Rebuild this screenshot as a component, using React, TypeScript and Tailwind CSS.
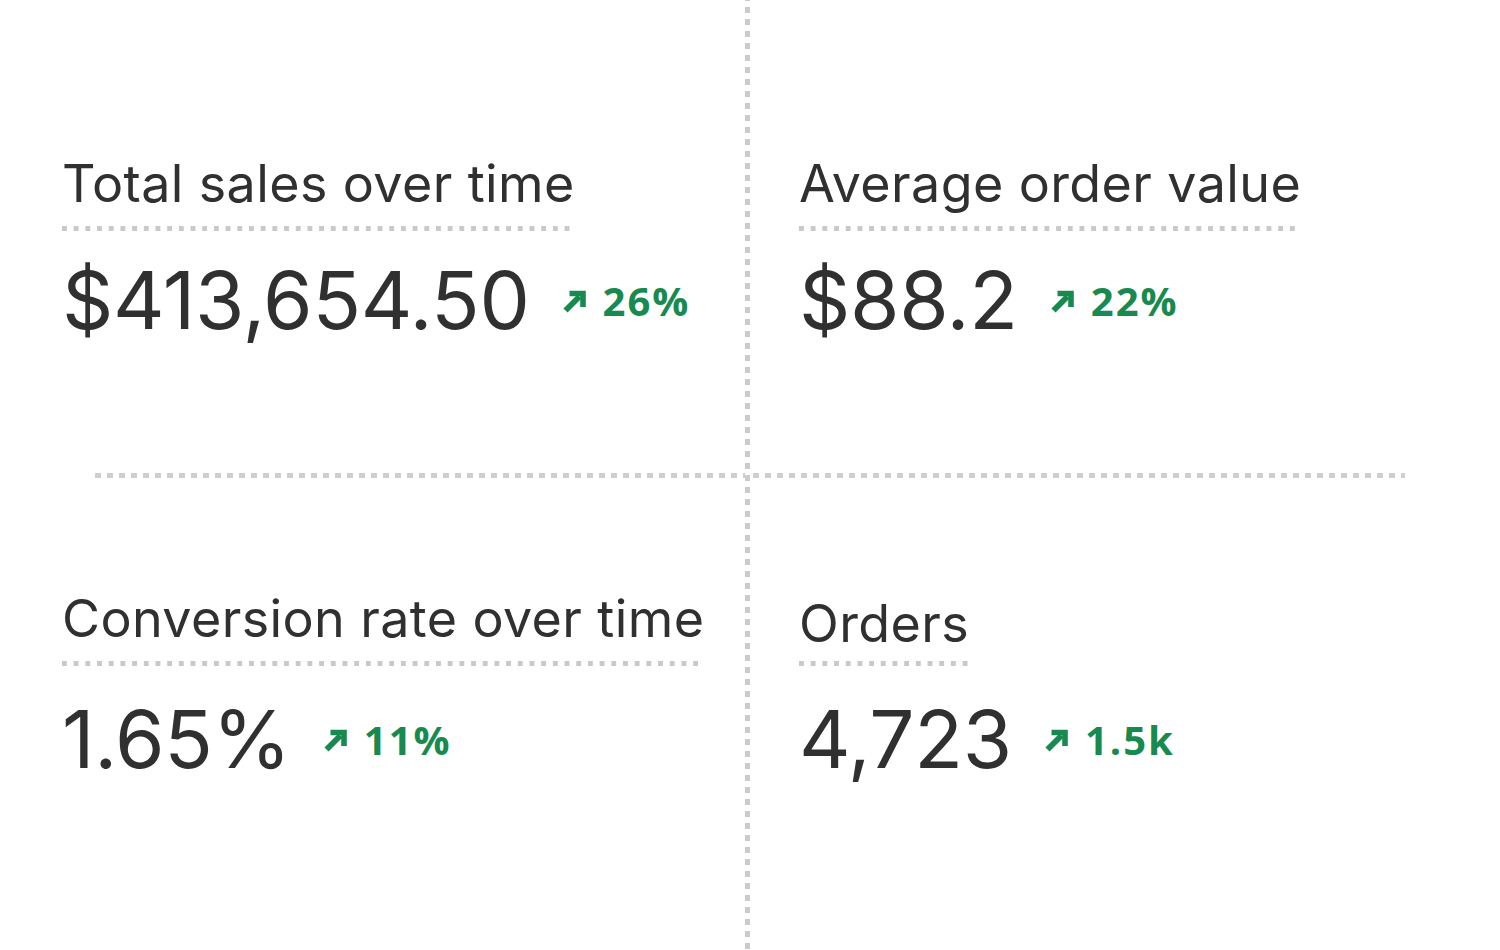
import React from "react";

const Arrow = () => (
  <svg width="25" height="24" viewBox="0 0 25 24" fill="none" className="shrink-0">
    <path d="M2.5 21.5 L16.5 7.5" stroke="#188a50" strokeWidth="5.8" strokeLinecap="butt" />
    <path d="M6.5 4.5 H20 V18" stroke="#188a50" strokeWidth="5.6" strokeLinecap="butt" strokeLinejoin="miter" />
  </svg>
);

const titleCls =
  "inline-block text-[52px] leading-[62px] tracking-[0.4px] text-[#303030] pb-[16px] bg-[linear-gradient(to_right,#c9c9c9_5px,transparent_5px)] bg-[length:11.7px_5px] bg-bottom-left bg-repeat-x";

function Metric({
  title,
  value,
  delta,
  titleShift = 0,
  valueShift = 0,
}: {
  title: string;
  value: string;
  delta: string;
  titleShift?: number;
  valueShift?: number;
}) {
  return (
    <div className="flex flex-col items-start">
      <span className={titleCls + (titleShift ? " pt-[5px] !pb-[11px]" : "")}>{title}</span>
      <div className={"flex items-center " + (valueShift ? "mt-[32px]" : "mt-[28px]")}>
        <span className="text-[80px] leading-[82px] text-[#303030] tracking-[-0.3px]">{value}</span>
        <div className="flex items-center ml-[33px] gap-[15px] mt-[2px]">
          <Arrow />
          <span
            className="text-[40px] leading-[44px] font-bold text-[#188a50] tracking-[2px]"
            style={{ fontFamily: '"Open Sans", "Noto Sans", sans-serif' }}
          >
            {delta}
          </span>
        </div>
      </div>
    </div>
  );
}

export default function App() {
  return (
    <div
      className="w-[1500px] h-[950px] bg-white overflow-hidden flex"
      style={{ fontFamily: 'Inter, "Noto Sans", sans-serif' }}
    >
      {/* left column */}
      <div className="w-[745px] h-full flex flex-col">
        <div className="h-[473px] pl-[62px] pt-[153px]">
          <Metric title="Total sales over time" value="$413,654.50" delta="26%" />
        </div>
        <div className="h-[5px] ml-[95px] bg-[linear-gradient(to_right,#cfcfcf_6px,transparent_6px)] bg-[length:12px_5px] bg-repeat-x" />
        <div className="flex-1 pl-[62px] pt-[110px]">
          <Metric title="Conversion rate over time" value="1.65%" delta="11%" valueShift={4} />
        </div>
      </div>
      {/* vertical divider */}
      <div className="w-[5px] h-full bg-[linear-gradient(to_bottom,#cbcbcb_6px,transparent_6px)] bg-[length:5px_12px] bg-[position:0_7px] bg-repeat-y" />
      {/* right column */}
      <div className="flex-1 h-full flex flex-col">
        <div className="h-[473px] pl-[49px] pt-[153px]">
          <Metric title="Average order value" value="$88.2" delta="22%" />
        </div>
        <div className="h-[5px] mr-[95px] bg-[linear-gradient(to_right,#cfcfcf_6px,transparent_6px)] bg-[length:12px_5px] bg-[position:3px_0] bg-repeat-x" />
        <div className="flex-1 pl-[49px] pt-[110px]">
          <Metric title="Orders" value="4,723" delta="1.5k" titleShift={5} valueShift={4} />
        </div>
      </div>
    </div>
  );
}
